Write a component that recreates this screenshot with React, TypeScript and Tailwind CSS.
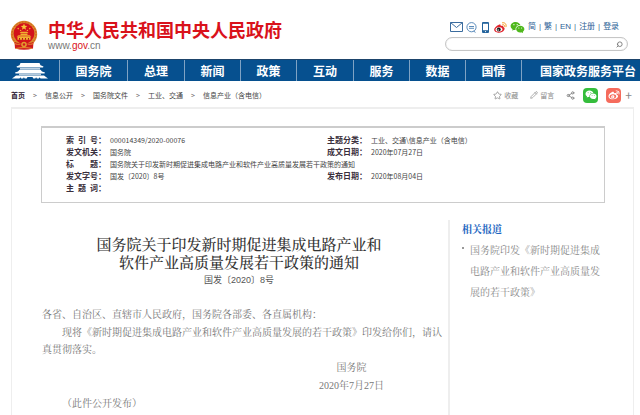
import React from "react";
import { RiWechatFill, RiWeiboFill } from "react-icons/ri";
import { Star, Share2, Pencil, Search } from "lucide-react";

const sans = "font-['Liberation_Sans','Noto_Sans_CJK_SC',sans-serif]";
const cjk = "font-['Noto_Sans_CJK_SC',sans-serif]";
const serif = "font-['Liberation_Serif','Noto_Serif_CJK_SC','Noto_Sans_CJK_SC',serif]";

function Emblem() {
  return (
    <svg viewBox="0 0 28 30" className="mt-0.5 h-[30px] w-7 shrink-0" aria-hidden="true">
      <circle cx="14" cy="14" r="13.2" fill="#dc8a2c" />
      <circle cx="14" cy="14" r="12" fill="none" stroke="#c8501c" strokeWidth="1" strokeDasharray="1.6 1.4" />
      <circle cx="14" cy="13.5" r="10.4" fill="#d3121a" />
      <path d="M14 3.6l.9 2.2 2.4.1-1.9 1.5.7 2.3-2.1-1.3-2.1 1.3.7-2.3-1.9-1.5 2.4-.1z" fill="#f5c63c" />
      <g fill="#f0b030">
        <circle cx="8.2" cy="8.6" r=".8" />
        <circle cx="10.6" cy="10.4" r=".7" />
        <circle cx="17.4" cy="10.4" r=".7" />
        <circle cx="19.8" cy="8.6" r=".8" />
        <path d="M9.5 13l1.5-1.3h6l1.5 1.3zM10.5 13.6h7v1.4h-7zM6.5 16.4l2-1.2h11l2 1.2zM7.5 16.8h13v3h-13z" />
      </g>
      <path d="M9 18h1v1.8H9zM12 18h1v1.8h-1zM15 18h1v1.8h-1zM18 18h1v1.8h-1z" fill="#b5121a" />
      <path d="M4.5 22c3 1.5 6 1 9.5.6 3.5.4 6.500.9 9.500-.6l-.5 6.500c-6 1.600-12 1.600-18 0z" fill="#cf1a1c" />
      <circle cx="14" cy="24.5" r="2.8" fill="#e39a2e" />
      <circle cx="14" cy="24.5" r="1.2" fill="#cf1a1c" />
      <path d="M4.5 23.5c2 1 4 1 6 .4M23.5 23.5c-2 1-4 1-6 .4M6 28.5c5-1.2 11-1.2 16 0" stroke="#e8a032" strokeWidth=".9" fill="none" />
    </svg>
  );
}

function Gate() {
  return (
    <svg viewBox="0 0 36 16" className="h-4 w-9" fill="#fff" aria-hidden="true">
      <path d="M8.5 0h19l1 2.2 3 1.3-.5 1H5l-.5-1 3-1.3z" />
      <path d="M8 5h20v1.6H8z" opacity=".75" />
      <path d="M7.5 6.8h21l1.5 1.7 3 1-.5.9h-29l-.5-.9 3-1z" />
      <path d="M7 10.6h22v1.6H7z" opacity=".7" />
      <path d="M4 12.4h28l4 3.1h-7.500l-.8-1.300-.8 1.300h-2l-.8-1.300-.8 1.300h-2l-.8-1.500h-5l-.8 1.500h-2l-.8-1.300-.8 1.300h-2l-.8-1.300-.8 1.300H0z" />
    </svg>
  );
}

function MailIcon() {
  return (
    <svg viewBox="0 0 13 10" className="h-2.5 w-[13px]" fill="none" stroke="#3b6c9e" aria-hidden="true">
      <path d="M.5.5h12v9H.5zM.5.5l6 5 6-5" />
    </svg>
  );
}

function ChatIcon() {
  return (
    <svg viewBox="0 0 11 11" className="size-[11px]" fill="none" stroke="#4a7fb3" aria-hidden="true">
      <circle cx="5.5" cy="5.2" r="4.6" strokeWidth=".9" />
      <path d="M3 4.5h5M3 6.3h5M7.5 9l2 1.4" strokeWidth=".9" />
    </svg>
  );
}

function PhoneIcon() {
  return (
    <svg viewBox="0 0 7 11" className="h-[11px] w-[7px]" aria-hidden="true">
      <rect width="7" height="11" rx="1" fill="#23639c" />
      <path d="M1 1.8h5v6.4H1z" fill="#fff" />
      <circle cx="3.5" cy="9.6" r=".6" fill="#fff" />
    </svg>
  );
}

function WeiboIcon() {
  return (
    <svg viewBox="0 0 26 22" className="h-[11px] w-[13px]" aria-hidden="true">
      <path d="M9 6c3-1.6 5-.6 4.4 2 3-1.2 6-.6 5 2.2 3 1 3.6 3.4 2 6C18 20 13 22 8.5 21.5 4 21 0 19 .3 15.2.6 12 5 7.6 9 6z" fill="#e0222a" />
      <ellipse cx="10" cy="15" rx="7" ry="4.5" fill="#fff" transform="rotate(-8 10 15)" />
      <circle cx="9.5" cy="15" r="3.9" fill="#1b1b1b" />
      <circle cx="8.3" cy="16" r="1.3" fill="#fff" />
      <path d="M17 1.5c5-1 8.5 3 7 8M17.5 5.2c2.5-.4 4 1.3 3.4 3.6" stroke="#f59a23" strokeWidth="2" fill="none" strokeLinecap="round" />
    </svg>
  );
}

const nav = ["国务院", "总理", "新闻", "政策", "互动", "服务", "数据", "国情", "国家政务服务平台"];
const crumbs = ["首页", "信息公开", "国务院文件", "工业、交通", "信息产业（含电信）"];
const account = ["简", "繁", "EN", "注册", "登录"];

function Header() {
  return (
    <header className="flex items-start justify-between pb-2 pl-2.5 pr-3">
      <a href="#home" className="flex items-start gap-2.5 pt-[18px]">
        <Emblem />
        <span className="flex flex-col">
          <span className={`${cjk} text-[18px] font-bold leading-[22px] text-[#d9121b]`}>中华人民共和国中央人民政府</span>
          <span className="font-['Liberation_Sans',sans-serif] text-[10px] leading-[11px] text-[#777]">
            www.<span className="text-[#d9121b]">gov</span>.cn
          </span>
        </span>
      </a>
      <div className="flex flex-col gap-1 pt-[21px]">
        <div className="flex h-3 items-center gap-[3px] pl-[5px]">
          <div className="flex items-center gap-[3px]">
            <button aria-label="邮箱"><MailIcon /></button>
            <button aria-label="留言"><ChatIcon /></button>
            <button aria-label="手机" className="px-0.5"><PhoneIcon /></button>
            <button aria-label="微博"><WeiboIcon /></button>
            <button aria-label="微信"><RiWechatFill className="size-[15px] text-[#4fb81c]" /></button>
          </div>
          <ul className={`${sans} flex items-center text-[8px] leading-3 text-[#2d6196]`}>
            {account.map((a, i) => (
              <li key={a} className="flex">
                {i > 0 && <span className="w-2 text-center text-[#4c6f88]">|</span>}
                <a href="#account">{a}</a>
              </li>
            ))}
          </ul>
        </div>
        <form className="flex h-[14px] w-[183px] items-center rounded-full border border-[#c6c6c6] pr-1 shadow-[inset_0_0_1px_#ccc]">
          <input aria-label="搜索" className="min-w-0 flex-1 bg-transparent pl-2 text-[8px] outline-none" />
          <button type="button" aria-label="搜索">
            <Search className="size-[7px] -scale-x-100 text-[#777]" strokeWidth={3} />
          </button>
        </form>
      </div>
    </header>
  );
}

function Meta({ label, children }: { label: React.ReactNode; children?: React.ReactNode }) {
  return (
    <>
      <th scope="row" className="p-0 text-left text-[8px] font-bold text-[#3a2f3c]">
        <span className="flex"><span className="flex w-8 justify-between">{label}</span>：</span>
      </th>
      <td className="whitespace-nowrap p-0 text-[7px] text-[#444]">{children}</td>
    </>
  );
}

const spread = (s: string) => s.split("").map((c) => <span key={c}>{c}</span>);

export default function App() {
  return (
    <div className={`${cjk} flex min-h-screen flex-col overflow-hidden bg-white`}>
      <Header />
      <nav className="border-t border-[#1d446b] bg-[#06508f]">
        <ul className="grid h-[21px] grid-cols-[60fr_68fr_57fr_56fr_56fr_57fr_56fr_56fr_56fr_118fr] divide-x divide-[#7fa3c4] text-[12px] font-bold leading-5 text-white">
          <li className="flex items-center justify-center"><a href="#home" aria-label="首页"><Gate /></a></li>
          {nav.map((n) => (
            <li key={n} className="flex items-center justify-center whitespace-nowrap last:justify-end last:pr-1"><a href="#nav">{n}</a></li>
          ))}
        </ul>
      </nav>

      <div className="flex h-[26px] items-center justify-between pl-[11px] pr-2 pt-0.5 text-[7px] text-[#444]">
        <ol className="flex">
          {crumbs.map((c, i) => (
            <li key={c} className="flex">
              {i > 0 && <span className="w-5 text-center text-[#666]">&gt;</span>}
              <a href="#crumb" className={i === 0 ? "font-bold text-[#2d2030]" : ""}>{c}</a>
            </li>
          ))}
        </ol>
        <div className="flex items-center text-[#888]">
          <button className="flex items-center gap-0.5"><Star className="size-[9px]" />收藏</button>
          <button className="ml-3 flex items-center gap-0.5"><Pencil className="size-2" />留言</button>
          <button aria-label="分享" className="ml-3"><Share2 className="size-[9px]" strokeWidth={2.5} /></button>
          <button aria-label="微信" className="ml-2 flex size-[15px] items-center justify-center rounded-sm bg-[#35bd3c] text-white"><RiWechatFill className="size-3" /></button>
          <button aria-label="微博" className="ml-2 flex size-[15px] items-center justify-center rounded-sm bg-[#f56b5c] text-white"><RiWeiboFill className="size-3" /></button>
          <button aria-label="更多" className="ml-1 text-[12px] leading-3">+</button>
        </div>
      </div>

      <main className="ml-[11px] mr-1.5 flex-1 border-x border-t-2 border-[#eee]">
        <section className="ml-[29px] mr-7 mt-[17px] border border-t-2 border-[#ccc] pb-2 pl-6 pt-1.5">
          <table className="w-full table-fixed border-collapse leading-3">
            <colgroup>
              <col className="w-11" /><col className="w-[217px]" /><col className="w-11" /><col />
            </colgroup>
            <tbody>
              <tr>
                <Meta label={spread("索引号")}>000014349/2020-00076</Meta>
                <Meta label="主题分类">工业、交通\信息产业（含电信）</Meta>
              </tr>
              <tr>
                <Meta label="发文机关">国务院</Meta>
                <Meta label="成文日期">2020年07月27日</Meta>
              </tr>
              <tr>
                <Meta label={spread("标题")}>国务院关于印发新时期促进集成电路产业和软件产业高质量发展若干政策的通知</Meta>
              </tr>
              <tr>
                <Meta label="发文字号">国发〔2020〕8号</Meta>
                <Meta label="发布日期">2020年08月04日</Meta>
              </tr>
              <tr><Meta label={spread("主题词")} /></tr>
            </tbody>
          </table>
        </section>

        <div className="mt-[17px] flex">
          <article className={`${serif} flex-1 pl-[30px] pr-1 pt-4`}>
            <div className="pr-2 text-center">
              <h1 className="text-[15px] font-medium leading-[18px] text-[#333]">
                国务院关于印发新时期促进集成电路产业和<br />软件产业高质量发展若干政策的通知
              </h1>
              <p className={`${sans} text-[9px] leading-4 text-[#555]`}>国发〔2020〕8号</p>
            </div>
            <div className="mt-[18px] flex flex-col gap-px text-[10px] leading-[17px] text-[#777]">
              <p>各省、自治区、直辖市人民政府，国务院各部委、各直属机构：</p>
              <p className="indent-5">现将《新时期促进集成电路产业和软件产业高质量发展的若干政策》印发给你们，请认真贯彻落实。</p>
              <div className="mr-15 flex flex-col gap-px self-end whitespace-nowrap text-center">
                <p>国务院</p>
                <p>2020年7月27日</p>
              </div>
              <p className="indent-5">（此件公开发布）</p>
            </div>
          </article>
          <aside className={`${serif} min-h-[195px] w-[185px] border-l-2 border-[#eee] pl-3 pr-7`}>
            <h2 className="text-[10px] font-bold leading-5 text-[#1c66bf]">相关报道</h2>
            <ul className="text-[10px] leading-[21px] text-[#888]">
              <li className="flex gap-1.5"><span className="mt-[7px] size-0.5 shrink-0 rounded-full bg-[#777]" />
                <a href="#news">国务院印发《新时期促进集成电路产业和软件产业高质量发展的若干政策》</a>
              </li>
            </ul>
          </aside>
        </div>
      </main>
    </div>
  );
}
